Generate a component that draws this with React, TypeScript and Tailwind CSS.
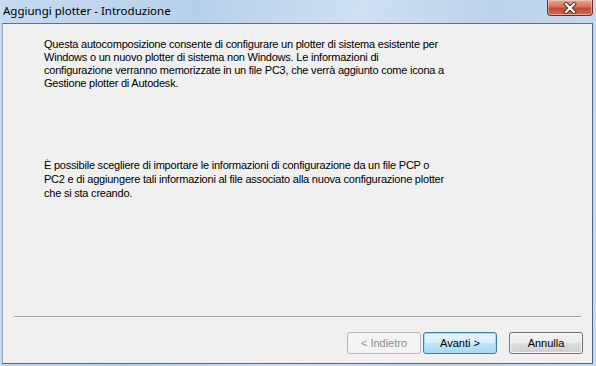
import React from "react";

function WinButton({
  children,
  variant,
}: {
  children: React.ReactNode;
  variant: "normal" | "default" | "disabled";
}) {
  const base =
    "w-[74px] h-[22px] rounded-[3px] border flex items-center justify-center text-[11px] leading-none";
  if (variant === "disabled") {
    return (
      <div className={`${base} border-[#b5b9bd] bg-[#f4f4f4] text-[#8d8d8d]`}>
        {children}
      </div>
    );
  }
  if (variant === "default") {
    return (
      <div
        className={`${base} border-[#3c7fb1] text-black shadow-[inset_0_0_0_1px_#a7d9f5] bg-[linear-gradient(to_bottom,#eaf6fd_0%,#d9f0fc_50%,#bee6fd_51%,#a7d9f5_100%)]`}
      >
        {children}
      </div>
    );
  }
  return (
    <div
      className={`${base} border-[#707070] text-black shadow-[inset_0_0_0_1px_#fbfbfb] bg-[linear-gradient(to_bottom,#f2f2f2_0%,#ebebeb_50%,#dddddd_51%,#cfcfcf_100%)]`}
    >
      {children}
    </div>
  );
}

export default function App() {
  return (
    <div className="w-[596px] h-[366px] flex flex-col bg-[linear-gradient(100deg,#c6dbf0_0%,#b7d0ea_30%,#cfe0f2_55%,#bcd3eb_75%,#c9dcef_100%)] overflow-hidden">
      {/* Title bar */}
      <div className="h-[23px] flex items-start relative">
        <div
          className="pl-[3px] pt-[3px] text-[11.5px] leading-[15px] text-black"
          style={{ fontFamily: '"Noto Sans", "Open Sans", sans-serif' }}
        >
          Aggiungi plotter - Introduzione
        </div>
        <div className="absolute right-[3px] top-0 w-[46px] h-[16px] rounded-b-[4px] border border-t-0 border-[#7a2a1e] bg-[linear-gradient(to_bottom,#e9a99a_0%,#d4705b_45%,#c24a32_55%,#d36a52_100%)] shadow-[inset_0_0_0_1px_rgba(255,220,210,0.5)] flex items-center justify-center">
          <svg width="14" height="12" viewBox="0 0 14 12">
            <path
              d="M3 2 L11 10 M11 2 L3 10"
              stroke="#4a2a25"
              strokeWidth="4"
              strokeLinecap="square"
            />
            <path
              d="M3 2 L11 10 M11 2 L3 10"
              stroke="#ffffff"
              strokeWidth="2.2"
              strokeLinecap="square"
            />
          </svg>
        </div>
      </div>

      {/* Client area */}
      <div
        className="flex-1 ml-[2px] mr-[3px] mb-[2px] bg-[#f0f0f0] border border-t-[#66707c] border-r-[#5a6470] border-b-[#5a6470] border-l-[#98a6b6] flex flex-col text-black"
        style={{ fontFamily: '"Liberation Sans", Arial, sans-serif' }}
      >
        <div className="pt-[14px] pl-[41px] text-[11px] leading-[13px] tracking-[-0.22px]">
          <p>
            Questa autocomposizione consente di configurare un plotter di sistema esistente per
            <br />
            Windows o un nuovo plotter di sistema non Windows. Le informazioni di
            <br />
            configurazione verranno memorizzate in un file PC3, che verrà aggiunto come icona a
            <br />
            Gestione plotter di Autodesk.
          </p>
          <p className="mt-[68px] leading-[14px]">
            È possibile scegliere di importare le informazioni di configurazione da un file PCP o
            <br />
            PC2 e di aggiungere tali informazioni al file associato alla nuova configurazione plotter
            <br />
            che si sta creando.
          </p>
        </div>
        <div className="flex-1" />
        <div className="mx-[11px] h-[2px] border-t border-t-[#a0a0a0] border-b border-b-white" />
        <div className="mt-[14px] mb-[9px] pr-[9px] flex justify-end">
          <WinButton variant="disabled">&lt; Indietro</WinButton>
          <div className="w-[2px]" />
          <WinButton variant="default">Avanti &gt;</WinButton>
          <div className="w-[12px]" />
          <WinButton variant="normal">Annulla</WinButton>
        </div>
      </div>
    </div>
  );
}
